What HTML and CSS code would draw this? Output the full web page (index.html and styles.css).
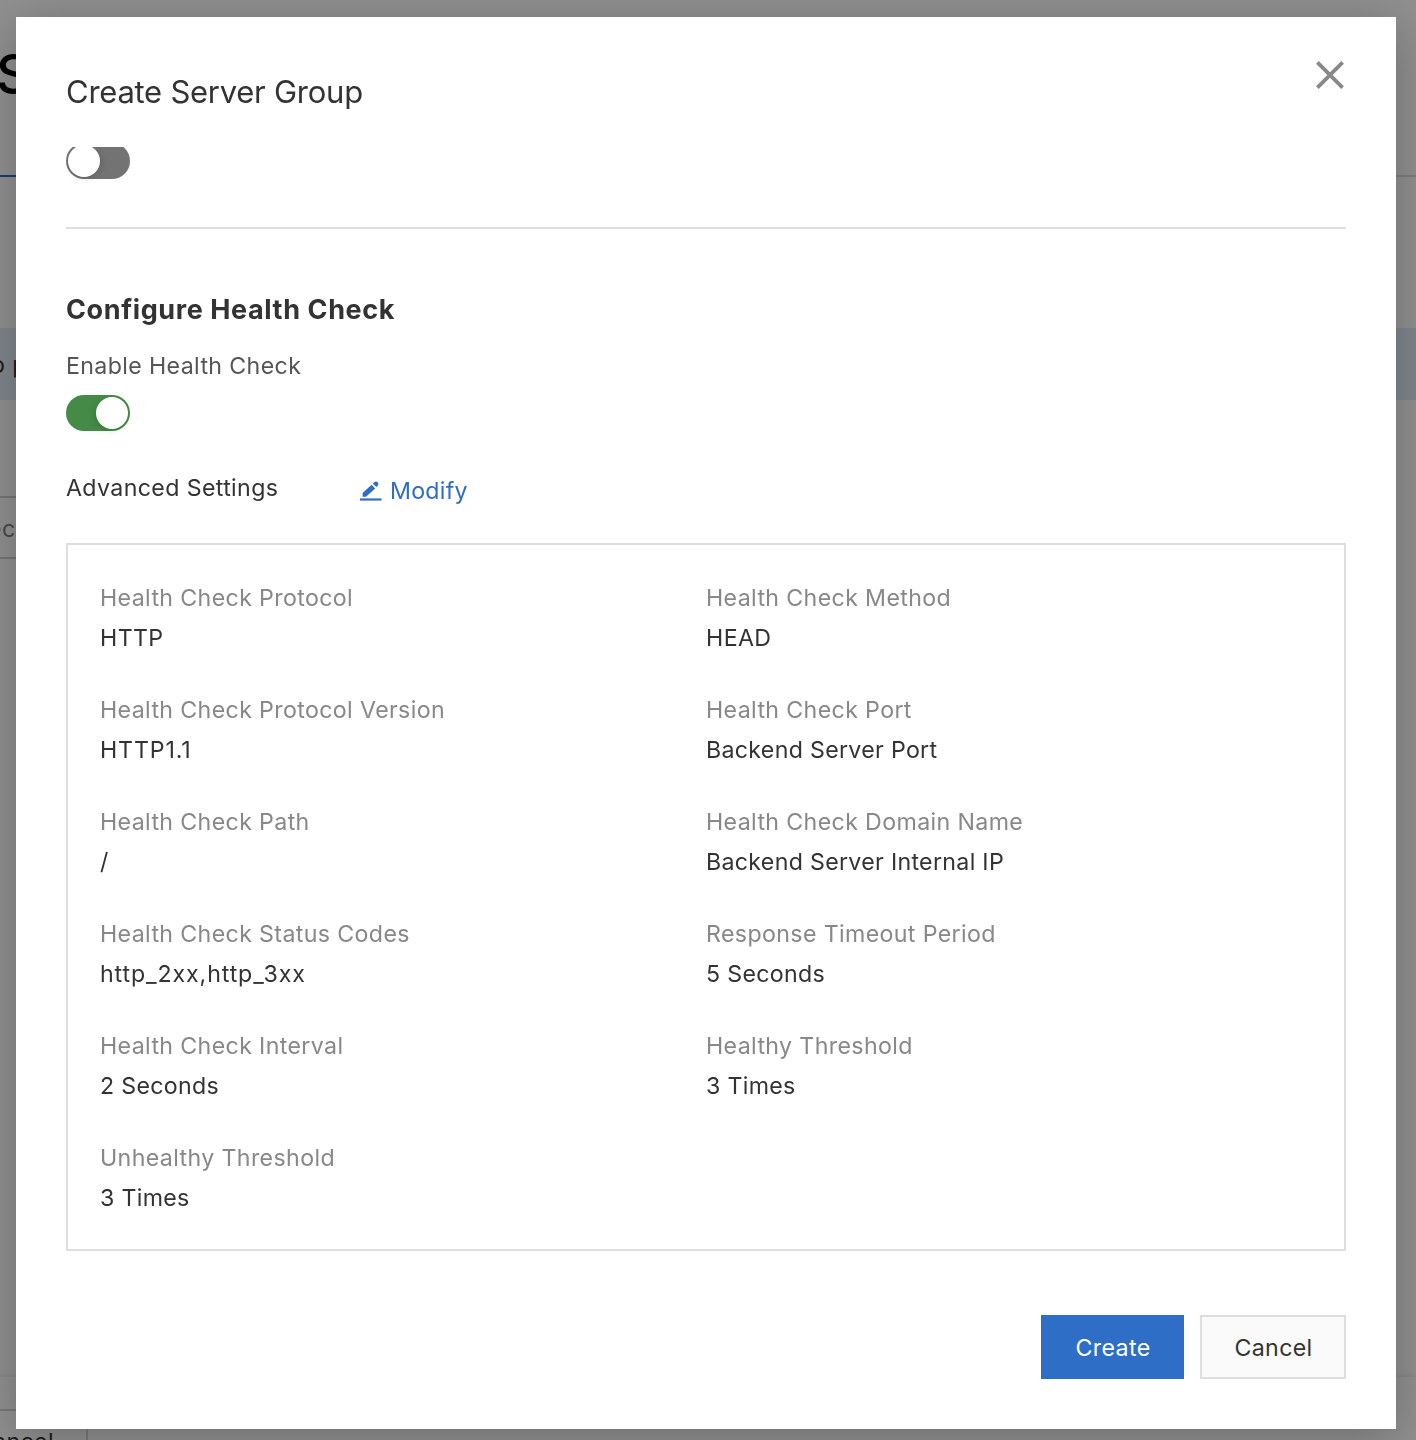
FILE: index.html
```
<!DOCTYPE html>
<html lang="en">
<head>
<meta charset="utf-8">
<title>Create Server Group</title>
<link rel="stylesheet" href="styles.css">
</head>
<body>
<div class="page" aria-hidden="true">
  <div class="page-title">S</div>
  <div class="page-steps"><span class="step-active"></span></div>
  <div class="page-notice">o p</div>
  <div class="page-field">ec</div>
  <div class="page-footer"><div class="page-button">ancel</div></div>
</div>
<div class="mask">
  <section class="dialog" role="dialog" aria-label="Create Server Group">
    <header class="dialog-header">
      <h1 class="dialog-title">Create Server Group</h1>
      <svg class="close" viewBox="0 0 28 28" role="img" aria-label="Close"><path d="M1.4 1.4 26.6 26.6M26.6 1.4 1.4 26.6"/></svg>
    </header>
    <div class="dialog-body">
      <div class="switch switch-clipped"><span class="knob"></span></div>
      <hr class="divider">
      <h2 class="section-title">Configure Health Check</h2>
      <div class="switch-label">Enable Health Check</div>
      <div class="switch switch-on"><span class="knob"></span></div>
      <div class="advanced">
        <span class="advanced-label">Advanced Settings</span>
        <a class="modify">
          <svg class="modify-icon" viewBox="0 0 22 20"><path d="M0 17.4h21.5v2.2H0z"/><path d="M2.6 15.8V12L11.6 3.8l3.6 3.6-9.2 8.4z"/><path d="M12.8 2.7 14.4 1.1Q16-.3 17.6 1.2q1.5 1.5.2 3.2L16.4 6z"/></svg>
          <span>Modify</span>
        </a>
      </div>
      <dl class="settings">
        <div class="item"><dt>Health Check Protocol</dt><dd class="caps">HTTP</dd></div>
        <div class="item"><dt>Health Check Method</dt><dd class="caps">HEAD</dd></div>
        <div class="item"><dt>Health Check Protocol Version</dt><dd class="code">HTTP1.1</dd></div>
        <div class="item"><dt>Health Check Port</dt><dd>Backend Server Port</dd></div>
        <div class="item"><dt>Health Check Path</dt><dd>/</dd></div>
        <div class="item"><dt>Health Check Domain Name</dt><dd>Backend Server Internal IP</dd></div>
        <div class="item"><dt>Health Check Status Codes</dt><dd class="code">http_2xx,http_3xx</dd></div>
        <div class="item"><dt>Response Timeout Period</dt><dd>5 Seconds</dd></div>
        <div class="item"><dt>Health Check Interval</dt><dd>2 Seconds</dd></div>
        <div class="item"><dt>Healthy Threshold</dt><dd>3 Times</dd></div>
        <div class="item"><dt>Unhealthy Threshold</dt><dd>3 Times</dd></div>
      </dl>
    </div>
    <footer class="dialog-footer">
      <button class="button button-primary">Create</button>
      <button class="button">Cancel</button>
    </footer>
  </section>
</div>
</body>
</html>
```
FILE: styles.css
```
* { box-sizing: border-box; }
body { margin: 0; height: 1440px; overflow: hidden; background: #fff; color: #333; font: 23.2px/40px Inter, "Liberation Sans", sans-serif; letter-spacing: .36px; }
h1, h2, dl, dd, hr { margin: 0; }

.page { height: 1440px; display: flex; flex-direction: column; overflow: hidden; white-space: nowrap; }
.page-title { height: 175px; padding-top: 44px; margin-left: -4px; font-size: 54px; line-height: 60px; font-weight: 500; color: #000; }
.page-steps { height: 2px; background: #dedede; display: flex; }
.step-active { width: 400px; background: #2f6ec6; }
.page-notice { height: 72px; margin-top: 151px; padding-top: 17px; background: #e2edf7; text-indent: -9px; }
.page-field { height: 63px; margin-top: 96px; border: solid #d0d0d0; border-width: 2px 0; padding-top: 11px; text-indent: -12px; width: 600px; color: #808080; }
.page-footer { height: 63px; margin-top: auto; padding-top: 32px; box-shadow: 0 0 8px rgba(0, 0, 0, .12); }
.page-button { width: 88px; height: 64px; border: solid #d6d6d6; border-width: 2px 2px 2px 0; line-height: 62px; text-indent: -7px; }

.mask { position: fixed; inset: 0; padding: 17px 20px 11px 16px; background: rgba(0, 0, 0, .44); }
.dialog { width: 1380px; height: 1412px; padding: 0 50px 50px; display: flex; flex-direction: column; background: #fff; box-shadow: 0 8px 44px rgba(0, 0, 0, .25); }
.dialog-header { height: 130px; display: flex; justify-content: space-between; }
.dialog-title { margin-top: 55px; font-size: 31px; font-weight: 400; line-height: 40px; letter-spacing: -.26px; }
.close { width: 28px; height: 28px; margin: 44px 2px 0 0; fill: none; stroke: #888; stroke-width: 3.8; }
.dialog-body { flex: 1; overflow: hidden; }

.switch { width: 64px; height: 36px; padding: 2px; border-radius: 18px; background: #737373; display: flex; }
.switch-clipped { margin-top: -4px; }
.switch-on { background: #458b47; justify-content: flex-end; margin-top: 9px; }
.knob { width: 32px; height: 32px; border-radius: 50%; background: #fff; box-shadow: 2px 2px 6px rgba(0, 0, 0, .12); }
.switch-on .knob { box-shadow: -2px 2px 6px rgba(0, 0, 0, .12); }
.divider { height: 2px; margin-top: 48px; border: 0; background: #dedede; }
.section-title { margin-top: 61px; font-size: 27px; line-height: 40px; letter-spacing: .6px; }
.switch-label { margin-top: 16px; color: #555; }
.advanced { display: flex; height: 72px; margin-top: 37px; margin-bottom: 3px; }
.advanced-label { width: 294px; }
.modify { display: flex; height: 46px; padding-top: 3px; color: #2f6ec6; gap: 8px; letter-spacing: .25px; }
.modify-icon { width: 22px; height: 20px; margin-top: 10px; fill: currentColor; }
.settings { height: 708px; padding: 33px 32px 31px; border: 2px solid #dedede; display: grid; grid-template-columns: 1fr 1fr; grid-auto-rows: 80px; row-gap: 32px; }
dt { color: #888; }
dd { color: #333; letter-spacing: .3px; }
.caps { letter-spacing: .4px; }
.code { letter-spacing: .88px; }

.dialog-footer { display: flex; justify-content: flex-end; gap: 16px; height: 64px; }
.button { width: 146px; height: 64px; padding: 2px 0 0 1px; border: 2px solid #dedede; background: #fafafa; color: #333; font: inherit; letter-spacing: inherit; }
.button-primary { width: 143px; border-color: #2f6ec6; background: #2f6ec6; color: #fff; }
```
